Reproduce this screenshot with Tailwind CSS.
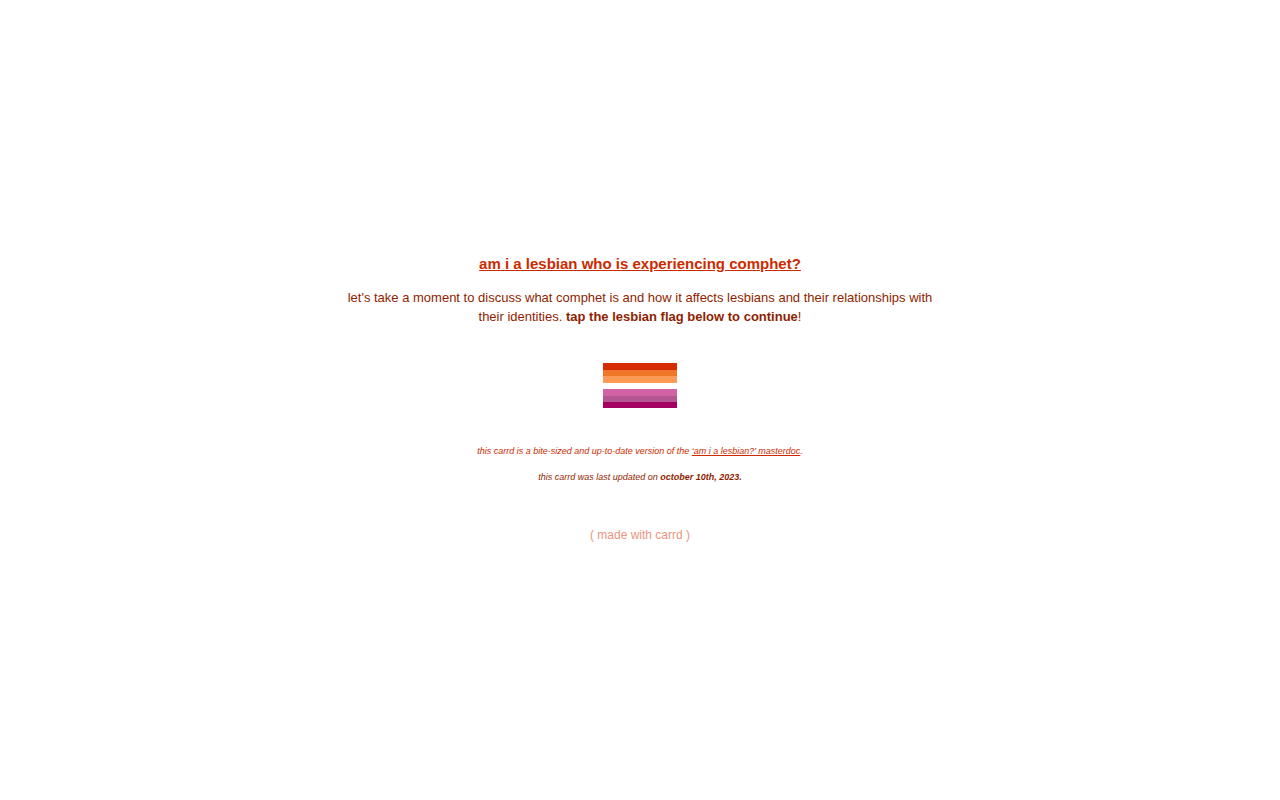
<!DOCTYPE html>
<html lang="en">
<head>
    <meta charset="UTF-8">
    <meta name="viewport" content="width=device-width, initial-scale=1.0">
    <title>am i a lesbian who is experiencing comphet?</title>
    <script src="https://cdn.jsdelivr.net/npm/@tailwindcss/browser@4"></script>
</head>
<body class="min-h-screen bg-white flex flex-col items-center justify-center px-4 pb-1 font-['Liberation_Sans',Arial,sans-serif] text-center">
    <main class="w-full max-w-[600px] flex flex-col items-center">
        <h1 class="text-[15px] leading-6 font-bold underline text-[#cc2b00]">am i a lesbian who is experiencing comphet?</h1>
        <p class="mt-3 text-[13px] leading-[19px] text-[#8f1e00]">let's take a moment to discuss what comphet is and how it affects lesbians and their relationships with their identities. <strong>tap the lesbian flag below to continue</strong>!</p>

        <!-- Flag -->
        <a href="#comphet" aria-label="continue" class="mt-[37px] block">
            <svg class="block w-[74px] h-[45px]" viewBox="0 0 74 45" preserveAspectRatio="none">
                <rect width="74" height="7" fill="#d52d00"/>
                <rect y="7" width="74" height="6" fill="#ef7627"/>
                <rect y="13" width="74" height="7" fill="#ff9a56"/>
                <rect y="20" width="74" height="6" fill="#ffffff"/>
                <rect y="26" width="74" height="7" fill="#d162a4"/>
                <rect y="33" width="74" height="6" fill="#b55690"/>
                <rect y="39" width="74" height="6" fill="#a30262"/>
            </svg>
        </a>

        <p class="mt-9 text-[9px] leading-[14px] italic text-[#cc2b00]">this carrd is a bite-sized and up-to-date version of the <a href="#masterdoc" class="underline">‘am i a lesbian?’ masterdoc</a>.</p>
        <p class="mt-3 text-[9px] leading-[14px] italic text-[#8f1e00]">this carrd was last updated on <strong>october 10th, 2023.</strong></p>
    </main>
    <footer class="mt-[41px] text-xs leading-5">
        <a href="#carrd" class="text-[#ea9580]">( made with carrd )</a>
    </footer>
</body>
</html>
